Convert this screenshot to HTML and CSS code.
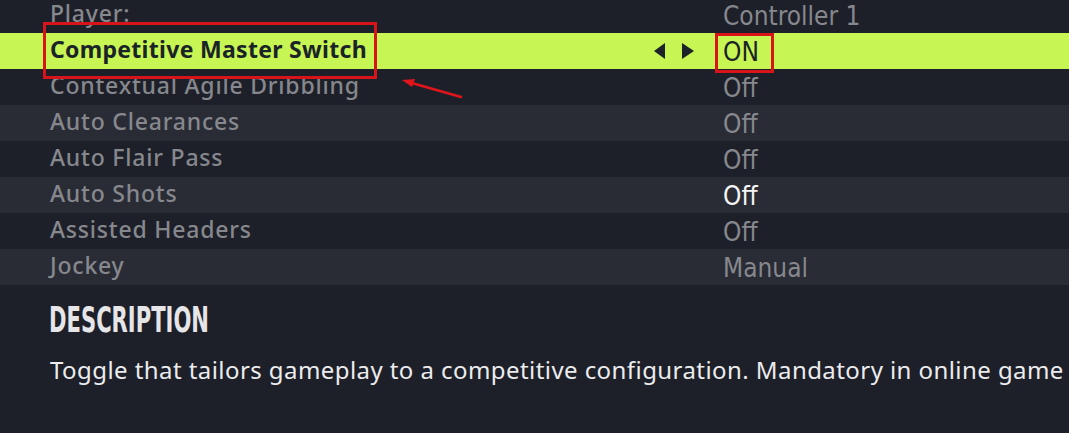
FILE: index.html
```html
<!DOCTYPE html>
<html lang="en">
<head>
<meta charset="utf-8">
<title>Settings</title>
<link rel="stylesheet" href="styles.css">
</head>
<body>
<div class="screen">
  <div class="list">
    <div class="row dark"><span class="label">Player:</span><span class="arrows"></span><span class="value">Controller 1</span></div>
    <div class="row active"><span class="label">Competitive Master Switch</span>
      <span class="arrows">
        <svg width="44" height="18" viewBox="0 0 44 18"><polygon points="0,9 11,1 11,17" fill="#1b2328"/><polygon points="28,1 28,17 40,9" fill="#1b2328"/></svg>
      </span><span class="value">ON</span></div>
    <div class="row dark"><span class="label">Contextual Agile Dribbling</span><span class="arrows"></span><span class="value">Off</span></div>
    <div class="row light"><span class="label">Auto Clearances</span><span class="arrows"></span><span class="value">Off</span></div>
    <div class="row dark"><span class="label">Auto Flair Pass</span><span class="arrows"></span><span class="value">Off</span></div>
    <div class="row light"><span class="label">Auto Shots</span><span class="arrows"></span><span class="value bright">Off</span></div>
    <div class="row dark"><span class="label">Assisted Headers</span><span class="arrows"></span><span class="value">Off</span></div>
    <div class="row light"><span class="label">Jockey</span><span class="arrows"></span><span class="value">Manual</span></div>
  </div>
  <div class="desc">
    <h2 class="desc-title">DESCRIPTION</h2>
    <p class="desc-text">Toggle that tailors gameplay to a competitive configuration. Mandatory in online game</p>
  </div>
  <div class="mark mark-label"></div>
  <div class="mark mark-value"></div>
  <svg class="pointer" width="70" height="30" viewBox="0 0 70 30">
    <line x1="63" y1="21" x2="12" y2="6.5" stroke="#e0151b" stroke-width="2.6" stroke-linecap="round"/>
    <polygon points="4,4 17,3 14,11" fill="#e0151b"/>
  </svg>
</div>
</body>
</html>
```
FILE: styles.css
```css
html, body {
  margin: 0;
  padding: 0;
}
body {
  background: #1e2029;
  width: 1069px;
  height: 433px;
  overflow: hidden;
  font-family: "Noto Sans", "DejaVu Sans", sans-serif;
}
.screen {
  position: relative;
  width: 1069px;
  height: 433px;
  overflow: hidden;
}
.list {
  margin-top: -3px;
}
.row {
  display: flex;
  align-items: center;
  height: 36px;
  padding-left: 50px;
  color: #86888e;
}
.row.dark { background: #1e2029; }
.row.light { background: #2a2c35; }
.row.active { background: #c7f553; color: #1a2428; }
.label {
  flex: 0 0 603px;
  font-size: 23px;
  font-weight: 500;
  letter-spacing: 0.8px;
  line-height: 32px;
  padding-bottom: 4px;
  white-space: nowrap;
}
.row.active .label {
  font-weight: 700;
  letter-spacing: 0.3px;
}
.arrows {
  flex: 0 0 70px;
  display: flex;
  align-items: center;
  height: 36px;
}
.arrows svg {
  display: block;
  margin-left: 1px;
}
.value {
  font-family: "DejaVu Sans", sans-serif;
  font-stretch: condensed;
  font-size: 26px;
  line-height: 33px;
  padding-top: 3px;
  white-space: nowrap;
}
.value.bright { color: #f4f4f4; }
.desc {
  padding: 15px 0 0 49px;
}
.desc-title {
  margin: 0;
  font-family: "DejaVu Sans", sans-serif;
  font-stretch: condensed;
  font-weight: 700;
  font-size: 35px;
  line-height: 40px;
  color: #e6e6e8;
  transform: scaleX(0.67);
  transform-origin: left center;
}
.desc-text {
  margin: 15px 0 0 1px;
  font-size: 24px;
  letter-spacing: 0.43px;
  line-height: 30px;
  color: #ececee;
  white-space: nowrap;
}
.mark {
  position: absolute;
  border: 3px solid #d8141b;
  box-sizing: border-box;
}
.mark-label {
  left: 43px;
  top: 22px;
  width: 334px;
  height: 57px;
}
.mark-value {
  left: 715px;
  top: 33px;
  width: 59px;
  height: 40px;
}
.pointer {
  position: absolute;
  left: 398px;
  top: 76px;
}
```
